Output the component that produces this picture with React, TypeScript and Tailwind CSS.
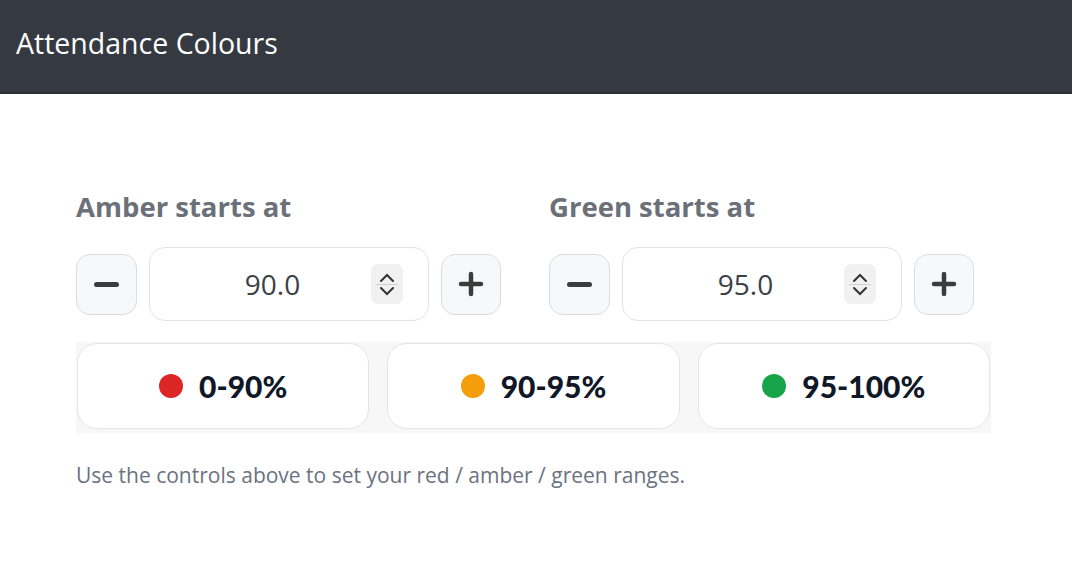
import { useState } from "react";

const sans = "font-['Open_Sans','Lato',sans-serif]";

function Stepper({
  label,
  value,
  onChange,
}: {
  label: string;
  value: number;
  onChange: (v: number) => void;
}) {
  return (
    <div className="flex w-[425px] flex-col">
      <h2 className="text-[27.5px] leading-[34px] font-bold text-[#6b7079]">{label}</h2>
      <div className="mt-[23px] flex items-center gap-3">
        <button
          type="button"
          onClick={() => onChange(value - 0.5)}
          className="flex h-[61px] w-[61px] items-center justify-center rounded-[14px] border-[1.5px] border-[#dcdcdc] bg-[#f7f8fa]"
        >
          <span className="block h-[5px] w-[25px] rounded-full bg-[#3c3c3c]" />
        </button>
        <div className="flex h-[74px] w-[280px] items-center rounded-[16px] border-[1.5px] border-[#e2e3e6] bg-white pr-[25px]">
          <span className="flex-1 pl-[24px] text-center text-[28px] text-[#3b4047]">{value.toFixed(1)}</span>
          <span className="flex h-[40px] w-[32px] flex-col items-center justify-center rounded-[7px] bg-[#f1f1f2]">
            <svg width="18" height="12" viewBox="0 0 18 12" fill="none" stroke="#333" strokeWidth="2" strokeLinecap="round">
              <path d="M3 10 9 4l6 6" />
            </svg>
            <span className="my-[1px] h-px w-[22px] bg-[#d0d0d0]" />
            <svg width="18" height="12" viewBox="0 0 18 12" fill="none" stroke="#333" strokeWidth="2" strokeLinecap="round">
              <path d="M3 2l6 6 6-6" />
            </svg>
          </span>
        </div>
        <button
          type="button"
          onClick={() => onChange(value + 0.5)}
          className="flex h-[61px] w-[60px] items-center justify-center rounded-[14px] border-[1.5px] border-[#dcdcdc] bg-[#f7f8fa]"
        >
          <svg width="26" height="26" viewBox="0 0 26 26" stroke="#3c3c3c" strokeWidth="4.5" strokeLinecap="round">
            <path d="M13 3v20M3 13h20" />
          </svg>
        </button>
      </div>
    </div>
  );
}

function Band({ dot, text }: { dot: string; text: string }) {
  return (
    <div className="flex h-[86px] items-center justify-center gap-[16px] rounded-[20px] border-[1.5px] border-[#e4e5ea] bg-white">
      <span className={`h-[24px] w-[24px] rounded-full ${dot}`} />
      <span className="font-['Lato',sans-serif] text-[30px] font-black text-[#101828]">{text}</span>
    </div>
  );
}

export default function App() {
  const [amber, setAmber] = useState(90);
  const [green, setGreen] = useState(95);

  return (
    <div className={`min-h-[576px] bg-white ${sans}`}>
      <header className="flex h-[94px] items-start border-b-2 border-[#2a2e34] bg-[#353a42] px-4 pt-[24px]">
        <h1 className="text-[28.5px] leading-[38px] text-white">Attendance Colours</h1>
      </header>
      <main className="px-[76px] pt-[96px]">
        <div className="flex gap-[48px]">
          <Stepper label="Amber starts at" value={amber} onChange={setAmber} />
          <Stepper label="Green starts at" value={green} onChange={setGreen} />
        </div>
        <div className="mt-[21px] grid w-[915px] grid-cols-3 gap-[18px] bg-[#f7f7f8] pt-px pr-px pb-1 pl-px">
          <Band dot="bg-[#dc2626]" text={`0-${amber}%`} />
          <Band dot="bg-[#f59e0b]" text={`${amber}-${green}%`} />
          <Band dot="bg-[#16a34a]" text={`${green}-100%`} />
        </div>
        <p className="mt-[27px] text-[21px] text-[#6b7280]">
          Use the controls above to set your red / amber / green ranges.
        </p>
      </main>
    </div>
  );
}
